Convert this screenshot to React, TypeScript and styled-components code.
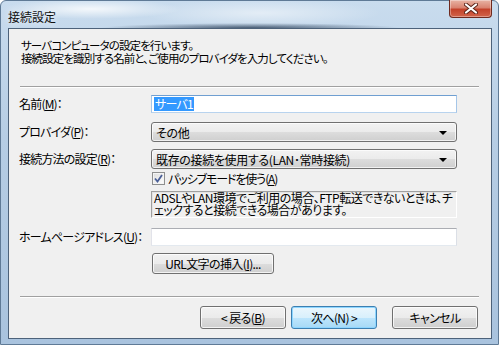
import React from "react";
import styled, { createGlobalStyle } from "styled-components";

const Global = createGlobalStyle`
  html, body { margin: 0; padding: 0; background: #fff; }
  body { width: 499px; height: 345px; overflow: hidden; }
  * { box-sizing: border-box; }
`;

const FONT = `"Noto Sans CJK JP", "Liberation Sans", sans-serif`;

const Window = styled.div`
  width: 499px;
  height: 345px;
  display: flex;
  flex-direction: column;
  font-family: ${FONT};
  font-size: 12px;
  font-feature-settings: "palt";
  color: #000;
  background:
    radial-gradient(ellipse 150px 5px at 250px 27px, rgba(40,60,85,0.8), rgba(40,60,85,0) 100%),
    radial-gradient(ellipse 90px 10px at 90px 8px, rgba(255,255,255,0.8), rgba(255,255,255,0) 100%),
    radial-gradient(ellipse 120px 14px at 260px 12px, rgba(255,255,255,0.5), rgba(255,255,255,0) 100%),
    linear-gradient(to bottom, #c9dcee 0%, #b6cde4 40%, #a9c3de 100%);
  border-radius: 6px 6px 0 0;
  border: 1px solid #5f7a96;
`;

const TitleBar = styled.div`
  height: 27px;
  display: flex;
  align-items: flex-start;
  justify-content: space-between;
  padding: 0 6px 0 7px;
  flex: none;
`;

const Title = styled.span`
  margin-top: 8px;
  font-size: 12px;
  line-height: 15px;
  color: #111;
  text-shadow: 0 0 6px rgba(255,255,255,0.9);
`;

const CloseButton = styled.div`
  width: 43px;
  height: 18px;
  margin-top: -1px;
  border: 1px solid #6f2a1f;
  border-top: none;
  border-radius: 0 0 4px 4px;
  background: linear-gradient(to bottom, #e8b4a4 0%, #d98370 45%, #c3422a 55%, #d2644a 100%);
  box-shadow: inset 0 0 0 1px rgba(255,255,255,0.35);
  display: flex;
  align-items: center;
  justify-content: center;
`;

const FrameBody = styled.div`
  flex: 1;
  display: flex;
  padding: 0 6px 6px 7px;
`;

const Client = styled.div`
  flex: 1;
  border: 1px solid #4d627a;
  background: #f0f0f0;
  display: flex;
  flex-direction: column;
  padding: 10px 12px 9px 10px;
`;

const Header = styled.div`
  padding-left: 2px;
  font-size: 11.5px;
  letter-spacing: -0.9px;
  line-height: 13px;
`;

const Separator = styled.div<{ $mt: number }>`
  margin-top: ${(p) => p.$mt}px;
  margin-left: 1px;
  height: 2px;
  border-top: 1px solid #a0a0a0;
  border-bottom: 1px solid #ffffff;
`;

const Row = styled.div<{ $mt: number }>`
  margin-top: ${(p) => p.$mt}px;
  display: grid;
  grid-template-columns: 132px 306px;
  align-items: center;
`;

const Label = styled.span`
  white-space: nowrap;
  line-height: 14px;
  letter-spacing: -0.8px;
`;

const U = styled.span`
  text-decoration: underline;
`;

const TextBox = styled.div<{ $focus?: boolean }>`
  height: 18px;
  border: 1px solid ${(p) => (p.$focus ? "#6f9fd1" : "#abadb3")};
  border-left-color: ${(p) => (p.$focus ? "#a5c6e8" : "#e2e3ea")};
  border-right-color: ${(p) => (p.$focus ? "#a5c6e8" : "#dbdfe6")};
  border-bottom-color: ${(p) => (p.$focus ? "#b8d3ee" : "#e3e9ef")};
  background: #fff;
  display: flex;
  align-items: center;
  padding-left: 2px;
`;

const Selected = styled.span`
  background: #3399ff;
  color: #fff;
  line-height: 14px;
  padding: 0 1px;
  letter-spacing: -0.8px;
`;

const Combo = styled.div`
  height: 20px;
  border: 1px solid #707070;
  border-radius: 3px;
  background: linear-gradient(to bottom, #f2f2f2 0%, #ebebeb 50%, #dddddd 50%, #cfcfcf 100%);
  box-shadow: inset 0 0 0 1px rgba(255,255,255,0.7);
  display: flex;
  align-items: center;
  justify-content: space-between;
  padding: 0 9px 0 4px;
  letter-spacing: -0.35px;
`;

const Arrow = styled.span`
  width: 0;
  height: 0;
  border-left: 4px solid transparent;
  border-right: 4px solid transparent;
  border-top: 4px solid #000;
  margin-top: 2px;
`;

const CheckRow = styled.div<{ $mt: number }>`
  margin-top: ${(p) => p.$mt}px;
  margin-left: 133px;
  display: flex;
  align-items: center;
  gap: 3px;
  height: 15px;
  letter-spacing: -1.1px;
`;

const CheckBox = styled.div`
  width: 13px;
  height: 13px;
  border: 1px solid #8e8f8f;
  background: linear-gradient(135deg, #dcdcdc 0%, #ffffff 100%);
  box-shadow: inset 0 0 0 1px #f4f4f4;
  display: flex;
  align-items: center;
  justify-content: center;
`;

const Desc = styled.div<{ $mt: number }>`
  margin-top: ${(p) => p.$mt}px;
  margin-left: 132px;
  width: 306px;
  height: 27px;
  border: 1px solid #a0a0a0;
  border-right-color: #fff;
  border-bottom-color: #fff;
  box-shadow: inset 1px 1px 0 #e3e3e3;
  padding: 0 0 0 2px;
  line-height: 12px;
  font-size: 12px;
  letter-spacing: -0.5px;
  white-space: nowrap;
`;

const Button = styled.div<{ $w: number; $default?: boolean }>`
  width: ${(p) => p.$w}px;
  height: ${(p) => (p.$default !== undefined ? 23 : 21)}px;
  border: 1px solid ${(p) => (p.$default ? "#3c7fb1" : "#707070")};
  border-radius: 3px;
  background: ${(p) =>
    p.$default
      ? "linear-gradient(to bottom, #eaf6fd 0%, #d9f0fc 50%, #bee6fd 50%, #a7d9f5 100%)"
      : "linear-gradient(to bottom, #f2f2f2 0%, #ebebeb 50%, #dddddd 50%, #cfcfcf 100%)"};
  box-shadow: inset 0 0 0 1px ${(p) => (p.$default ? "#8ed6ff" : "rgba(255,255,255,0.75)")};
  display: flex;
  align-items: center;
  justify-content: center;
  white-space: nowrap;
  line-height: 14px;
  letter-spacing: -0.6px;
`;

const UrlRow = styled.div<{ $mt: number }>`
  margin-top: ${(p) => p.$mt}px;
  margin-left: 133px;
  display: flex;
`;

const ButtonBar = styled.div<{ $mt: number }>`
  margin-top: ${(p) => p.$mt}px;
  display: flex;
  justify-content: flex-end;
  padding-right: 1px;
  gap: 5px;
`;

const Spacer = styled.div`
  width: 5px;
`;

export default function App() {
  return (
    <>
      <Global />
      <Window>
        <TitleBar>
          <Title>接続設定</Title>
          <CloseButton>
            <svg width="14" height="11" viewBox="0 0 14 11">
              <path d="M2 1.5 L12 9.5 M12 1.5 L2 9.5" stroke="#5a2418" strokeWidth="4" strokeLinecap="round" />
              <path d="M2 1.5 L12 9.5 M12 1.5 L2 9.5" stroke="#ffffff" strokeWidth="2.2" strokeLinecap="round" />
            </svg>
          </CloseButton>
        </TitleBar>
        <FrameBody>
          <Client>
            <Header>
              サーバコンピュータの設定を行います。
              <br />
              接続設定を識別する名前と、ご使用のプロバイダを入力してください。
            </Header>
            <Separator $mt={21} />
            <Row $mt={7}>
              <Label>
                名前(<U>M</U>)：
              </Label>
              <TextBox $focus>
                <Selected>サーバ1</Selected>
              </TextBox>
            </Row>
            <Row $mt={9}>
              <Label>
                プロバイダ(<U>P</U>)：
              </Label>
              <Combo>
                <span>その他</span>
                <Arrow />
              </Combo>
            </Row>
            <Row $mt={7}>
              <Label>
                接続方法の設定(<U>R</U>)：
              </Label>
              <Combo>
                <span>既存の接続を使用する(LAN･常時接続)</span>
                <Arrow />
              </Combo>
            </Row>
            <CheckRow $mt={2}>
              <CheckBox>
                <svg width="9" height="9" viewBox="0 0 9 9">
                  <path d="M1 4.5 L3.5 7.5 L8 1" stroke="#4a5f97" strokeWidth="1.8" fill="none" />
                </svg>
              </CheckBox>
              <span>
                パッシブモードを使う(<U>A</U>)
              </span>
            </CheckRow>
            <Desc $mt={5}>
              ADSLやLAN環境でご利用の場合、FTP転送できないときは、チ
              <br />
              ェックすると接続できる場合があります。
            </Desc>
            <Row $mt={10}>
              <Label>
                ホームページアドレス(<U>U</U>)：
              </Label>
              <TextBox />
            </Row>
            <UrlRow $mt={7}>
              <Button $w={122}>URL文字の挿入(<U>I</U>)...</Button>
            </UrlRow>
            <Separator $mt={22} />
            <ButtonBar $mt={8}>
              <Button $w={86} $default={false}>
                &lt; 戻る(<U>B</U>)
              </Button>
              <Button $w={86} $default>
                次へ(N) &gt;
              </Button>
              <Spacer />
              <Button $w={86} $default={false}>
                キャンセル
              </Button>
            </ButtonBar>
          </Client>
        </FrameBody>
      </Window>
    </>
  );
}
